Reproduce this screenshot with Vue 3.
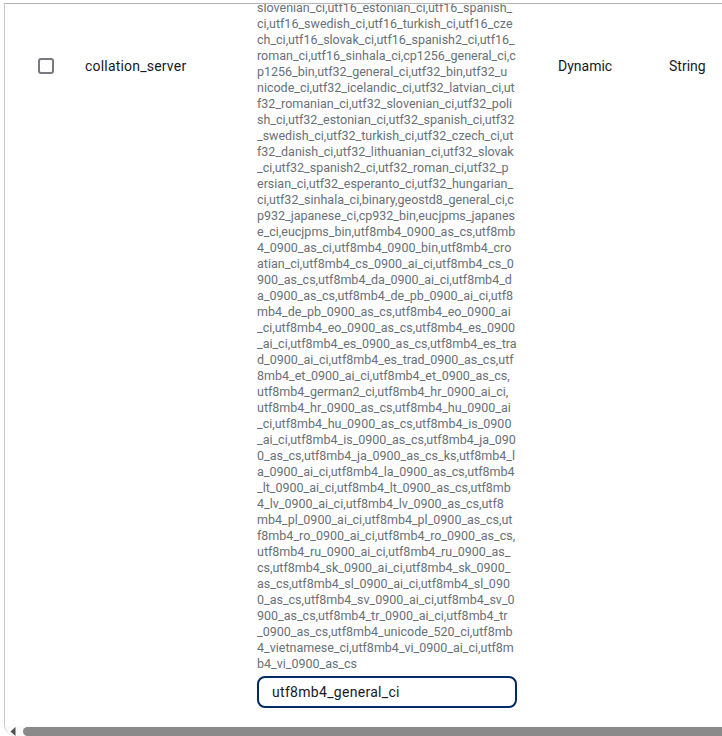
<script setup>
const lines = [
  'slovenian_ci,utf16_estonian_ci,utf16_spanish_',
  'ci,utf16_swedish_ci,utf16_turkish_ci,utf16_cze',
  'ch_ci,utf16_slovak_ci,utf16_spanish2_ci,utf16_',
  'roman_ci,utf16_sinhala_ci,cp1256_general_ci,c',
  'p1256_bin,utf32_general_ci,utf32_bin,utf32_u',
  'nicode_ci,utf32_icelandic_ci,utf32_latvian_ci,ut',
  'f32_romanian_ci,utf32_slovenian_ci,utf32_poli',
  'sh_ci,utf32_estonian_ci,utf32_spanish_ci,utf32',
  '_swedish_ci,utf32_turkish_ci,utf32_czech_ci,ut',
  'f32_danish_ci,utf32_lithuanian_ci,utf32_slovak',
  '_ci,utf32_spanish2_ci,utf32_roman_ci,utf32_p',
  'ersian_ci,utf32_esperanto_ci,utf32_hungarian_',
  'ci,utf32_sinhala_ci,binary,geostd8_general_ci,c',
  'p932_japanese_ci,cp932_bin,eucjpms_japanes',
  'e_ci,eucjpms_bin,utf8mb4_0900_as_cs,utf8mb',
  '4_0900_as_ci,utf8mb4_0900_bin,utf8mb4_cro',
  'atian_ci,utf8mb4_cs_0900_ai_ci,utf8mb4_cs_0',
  '900_as_cs,utf8mb4_da_0900_ai_ci,utf8mb4_d',
  'a_0900_as_cs,utf8mb4_de_pb_0900_ai_ci,utf8',
  'mb4_de_pb_0900_as_cs,utf8mb4_eo_0900_ai',
  '_ci,utf8mb4_eo_0900_as_cs,utf8mb4_es_0900',
  '_ai_ci,utf8mb4_es_0900_as_cs,utf8mb4_es_tra',
  'd_0900_ai_ci,utf8mb4_es_trad_0900_as_cs,utf',
  '8mb4_et_0900_ai_ci,utf8mb4_et_0900_as_cs,',
  'utf8mb4_german2_ci,utf8mb4_hr_0900_ai_ci,',
  'utf8mb4_hr_0900_as_cs,utf8mb4_hu_0900_ai',
  '_ci,utf8mb4_hu_0900_as_cs,utf8mb4_is_0900',
  '_ai_ci,utf8mb4_is_0900_as_cs,utf8mb4_ja_090',
  '0_as_cs,utf8mb4_ja_0900_as_cs_ks,utf8mb4_l',
  'a_0900_ai_ci,utf8mb4_la_0900_as_cs,utf8mb4',
  '_lt_0900_ai_ci,utf8mb4_lt_0900_as_cs,utf8mb',
  '4_lv_0900_ai_ci,utf8mb4_lv_0900_as_cs,utf8',
  'mb4_pl_0900_ai_ci,utf8mb4_pl_0900_as_cs,ut',
  'f8mb4_ro_0900_ai_ci,utf8mb4_ro_0900_as_cs,',
  'utf8mb4_ru_0900_ai_ci,utf8mb4_ru_0900_as_',
  'cs,utf8mb4_sk_0900_ai_ci,utf8mb4_sk_0900_',
  'as_cs,utf8mb4_sl_0900_ai_ci,utf8mb4_sl_090',
  '0_as_cs,utf8mb4_sv_0900_ai_ci,utf8mb4_sv_0',
  '900_as_cs,utf8mb4_tr_0900_ai_ci,utf8mb4_tr',
  '_0900_as_cs,utf8mb4_unicode_520_ci,utf8mb',
  '4_vietnamese_ci,utf8mb4_vi_0900_ai_ci,utf8m',
  'b4_vi_0900_as_cs'
]
</script>

<template>
  <div class="page">
    <div class="frame">
      <div class="row">
        <div class="cell-check"><span class="checkbox"></span></div>
        <div class="cell-name">collation_server</div>
        <div class="cell-values">
          <div class="allowed">
            <div v-for="line in lines" :key="line">{{ line }}</div>
          </div>
          <input class="value-input" type="text" value="utf8mb4_general_ci" />
        </div>
        <div class="cell-type">Dynamic</div>
        <div class="cell-data">String</div>
      </div>
      <div class="scrollbar">
        <svg class="arrow" width="6" height="9" viewBox="0 0 6 9"><path d="M5.5 0v9L0.5 4.5z" fill="#505050" /></svg>
        <div class="thumb"></div>
      </div>
    </div>
  </div>
</template>

<style>
html, body {
  margin: 0;
  overflow: hidden;
  background: #fff;
}
</style>

<style scoped>
.page {
  width: 722px;
  height: 736px;
  overflow: hidden;
  padding: 3px 0 0 4px;
  box-sizing: border-box;
  font-family: Roboto, "Open Sans", sans-serif;
  font-size: 14px;
  color: #16191f;
}

.frame {
  height: 733px;
  display: flex;
  flex-direction: column;
  border-top: 1px solid #b5b5b5;
  border-left: 1px solid #c8c8c8;
  border-bottom-left-radius: 12px;
  overflow: hidden;
  box-sizing: border-box;
}

.row {
  flex: 1;
  min-height: 0;
  display: flex;
  align-items: flex-start;
}

.row > div {
  flex: none;
}

.cell-check {
  width: 33px;
  padding: 54px 0 0 33px;
  display: flex;
}

.checkbox {
  width: 16px;
  height: 16px;
  box-sizing: border-box;
  border: 2px solid #77797f;
  border-radius: 3px;
}

.cell-name {
  width: 186px;
  padding: 52px 0 0 14px;
  box-sizing: border-box;
  line-height: 20px;
  letter-spacing: 0.2px;
}

.cell-values {
  width: 301px;
  margin-top: -4px;
  color: #687078;
  line-height: 16px;
  font-size: 12.5px;
}

.allowed {
  white-space: nowrap;
}

.value-input {
  display: block;
  width: 260px;
  height: 32px;
  box-sizing: border-box;
  margin-top: 4px;
  padding: 0 13px;
  border: 2px solid #002b66;
  border-radius: 8px;
  outline: none;
  font: inherit;
  font-size: 14px;
  letter-spacing: 0.3px;
  color: #16191f;
  background: #fff;
}

.cell-type {
  width: 111px;
  padding-top: 52px;
  line-height: 20px;
}

.cell-data {
  width: 60px;
  padding-top: 52px;
  line-height: 20px;
}

.scrollbar {
  flex: none;
  height: 10px;
  display: flex;
  align-items: center;
  background: #fafafa;
}

.arrow {
  margin-left: 5px;
}

.thumb {
  flex: 1;
  height: 9px;
  margin-left: 7px;
  border-radius: 5px 0 0 5px;
  background: #8a8a8a;
}
</style>
